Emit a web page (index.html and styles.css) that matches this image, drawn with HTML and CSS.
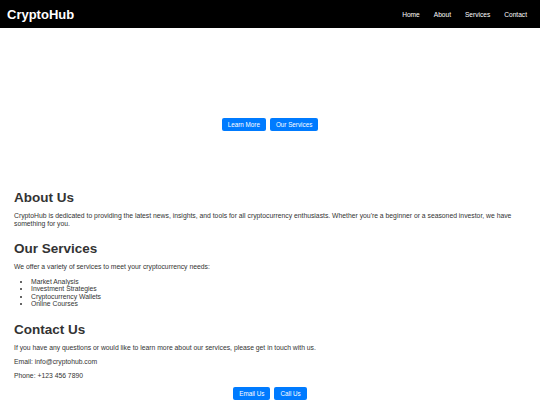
FILE: index.html
```html
<!DOCTYPE html>
<html>
<head>
<meta charset="utf-8">
<link rel="stylesheet" href="styles.css">
</head>
<body>
<header class="topbar">
  <div class="logo">CryptoHub</div>
  <nav class="nav">
    <a href="#">Home</a>
    <a href="#">About</a>
    <a href="#">Services</a>
    <a href="#">Contact</a>
  </nav>
</header>
<section class="hero">
  <div class="btns">
    <a class="btn" href="#">Learn More</a>
    <a class="btn" href="#">Our Services</a>
  </div>
</section>
<section class="sec">
  <h2>About Us</h2>
  <p>CryptoHub is dedicated to providing the latest news, insights, and tools for all cryptocurrency enthusiasts. Whether you're a beginner or a seasoned investor, we have something for you.</p>
</section>
<section class="sec">
  <h2>Our Services</h2>
  <p>We offer a variety of services to meet your cryptocurrency needs:</p>
  <ul>
    <li>Market Analysis</li>
    <li>Investment Strategies</li>
    <li>Cryptocurrency Wallets</li>
    <li>Online Courses</li>
  </ul>
</section>
<section class="sec">
  <h2>Contact Us</h2>
  <p>If you have any questions or would like to learn more about our services, please get in touch with us.</p>
  <p>Email: info@cryptohub.com</p>
  <p>Phone: +123 456 7890</p>
  <div class="btns contact-btns">
    <a class="btn" href="#">Email Us</a>
    <a class="btn" href="#">Call Us</a>
  </div>
</section>
</body>
</html>
```
FILE: styles.css
```css
html, body {
  margin: 0;
  padding: 0;
}
body {
  font-family: "Liberation Sans", Arial, sans-serif;
  color: #333;
  background: #fff;
  font-size: 6.8px;
}
.topbar {
  background: #000;
  height: 28px;
  display: flex;
  align-items: center;
  justify-content: space-between;
  padding: 0 13px 0 7px;
}
.logo {
  color: #fff;
  font-weight: bold;
  font-size: 13px;
}
.nav {
  display: flex;
  gap: 14px;
}
.nav a {
  color: #fff;
  text-decoration: none;
  font-size: 6.6px;
}
.hero {
  height: 162px;
  box-sizing: border-box;
  padding-top: 90px;
}
.btns {
  display: flex;
  justify-content: center;
  gap: 4px;
}
.btn {
  background: #007bff;
  color: #fff;
  text-decoration: none;
  font-size: 6.3px;
  padding: 3px 6px;
  border-radius: 2px;
  line-height: 7px;
}
.sec {
  display: flow-root;
  padding: 0 14px;
}
.sec + .sec {
  margin-top: 7px;
}
.sec h2 {
  font-size: 13.5px;
  margin: 0;
  line-height: 16px;
}
.sec p {
  margin: 6px 0;
  line-height: 8px;
}
.sec ul {
  margin: 7px 0;
  padding-left: 17px;
  line-height: 7.4px;
}
.contact-btns {
  margin-top: 7px;
}
```
